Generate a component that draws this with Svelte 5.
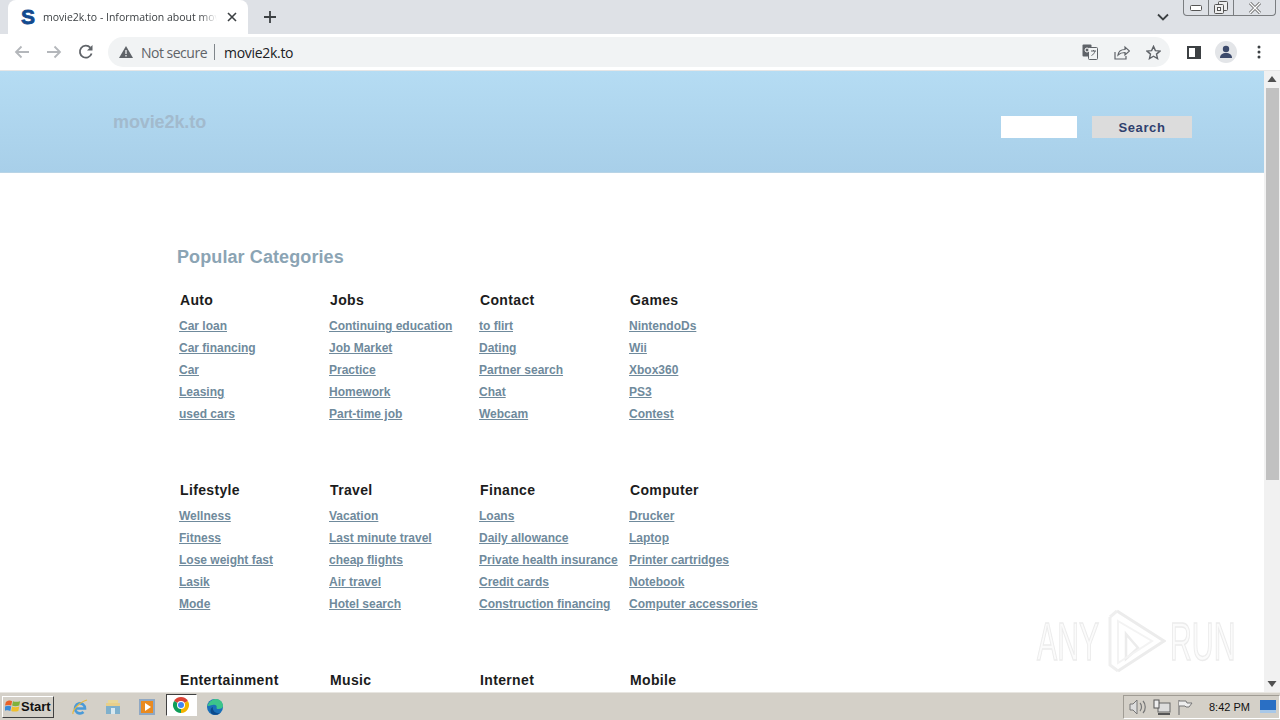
<script>
  const sections = [
    [
      { title: 'Auto', links: ['Car loan', 'Car financing', 'Car', 'Leasing', 'used cars'] },
      { title: 'Jobs', links: ['Continuing education', 'Job Market', 'Practice', 'Homework', 'Part-time job'] },
      { title: 'Contact', links: ['to flirt', 'Dating', 'Partner search', 'Chat', 'Webcam'] },
      { title: 'Games', links: ['NintendoDs', 'Wii', 'Xbox360', 'PS3', 'Contest'] }
    ],
    [
      { title: 'Lifestyle', links: ['Wellness', 'Fitness', 'Lose weight fast', 'Lasik', 'Mode'] },
      { title: 'Travel', links: ['Vacation', 'Last minute travel', 'cheap flights', 'Air travel', 'Hotel search'] },
      { title: 'Finance', links: ['Loans', 'Daily allowance', 'Private health insurance', 'Credit cards', 'Construction financing'] },
      { title: 'Computer', links: ['Drucker', 'Laptop', 'Printer cartridges', 'Notebook', 'Computer accessories'] }
    ],
    [
      { title: 'Entertainment', links: [] },
      { title: 'Music', links: [] },
      { title: 'Internet', links: [] },
      { title: 'Mobile', links: [] }
    ]
  ];
</script>

<div class="screen">
  <div class="tabstrip">
    <div class="tab">
      <span class="favicon">S</span>
      <span class="tab-title">movie2k.to - Information about movie2k.to</span>
      <svg class="tab-close" width="10" height="10" viewBox="0 0 10 10"><path d="M1 1l8 8M9 1l-8 8" stroke="#3c4043" stroke-width="1.6" /></svg>
    </div>
    <svg class="new-tab" width="12" height="12" viewBox="0 0 12 12"><path d="M6 0v12M0 6h12" stroke="#3c4043" stroke-width="1.8" /></svg>
    <div class="spacer"></div>
    <svg class="tab-menu" width="12" height="8" viewBox="0 0 12 8"><path d="M1 1.5l5 5 5-5" fill="none" stroke="#3c4043" stroke-width="1.8" /></svg>
    <div class="winctl">
      <span class="win-btn min"><svg width="12" height="6" viewBox="0 0 12 6"><rect x="0.5" y="0.5" width="11" height="5" rx="1" fill="#fff" stroke="#555" /></svg></span>
      <span class="win-btn max"><svg width="14" height="13" viewBox="0 0 14 13"><rect x="4.5" y="0.5" width="9" height="9" rx="1" fill="#eee" stroke="#555" /><rect x="0.5" y="3.5" width="9" height="9" rx="1" fill="#eee" stroke="#555" /><rect x="3.5" y="6.5" width="3" height="3" fill="#fff" stroke="#555" /></svg></span>
      <span class="win-btn close"><svg width="14" height="12" viewBox="0 0 14 12"><path d="M2 1l10 10M12 1L2 11" stroke="#666" stroke-width="3" /><path d="M2 1l10 10M12 1L2 11" stroke="#fff" stroke-width="1.4" /></svg></span>
    </div>
  </div>

  <div class="toolbar">
    <svg class="nav" width="16" height="14" viewBox="0 0 16 14"><path d="M15 7H2M7.5 1.5L2 7l5.5 5.5" fill="none" stroke="#b4b7bb" stroke-width="1.8" /></svg>
    <svg class="nav" width="16" height="14" viewBox="0 0 16 14"><path d="M1 7h13M8.5 1.5L14 7l-5.5 5.5" fill="none" stroke="#b4b7bb" stroke-width="1.8" /></svg>
    <svg class="nav" width="16" height="16" viewBox="0 0 16 16"><path d="M13.6 9.5A6 6 0 1 1 12.3 3.6" fill="none" stroke="#5f6368" stroke-width="1.8" /><path d="M14.5 1v5.5H9z" fill="#5f6368" /></svg>
    <div class="omnibox">
      <svg width="16" height="14" viewBox="0 0 16 14"><path d="M8 1l7 12H1z" fill="#5f6368" /><path d="M8 5v4M8 10v1.5" stroke="#f1f3f4" stroke-width="1.3" /></svg>
      <span class="not-secure">Not secure</span>
      <span class="divider"></span>
      <span class="url">movie2k.to</span>
      <div class="spacer"></div>
      <svg class="omni-icon" width="16" height="16" viewBox="0 0 16 16"><rect x="0.5" y="0.5" width="9" height="12" rx="1" fill="#5f6368" /><rect x="6.5" y="3.5" width="9" height="12" rx="1" fill="#f1f3f4" stroke="#5f6368" /><path d="M9 7h5M11.5 6v1M13 7c-.5 2-2 4-3.500 4.500" fill="none" stroke="#5f6368" /><circle cx="5" cy="6" r="2" fill="none" stroke="#fff" /></svg>
      <svg class="omni-icon" width="16" height="15" viewBox="0 0 16 15"><path d="M1 7v7h11v-3" fill="none" stroke="#5f6368" stroke-width="1.2" /><path d="M4 10c.5-4 3-5.500 7-5.500V2l4.500 4-4.500 4V7.500c-3 0-5 .5-7 2.500z" fill="none" stroke="#5f6368" stroke-width="1.2" /></svg>
      <svg class="omni-icon star" width="15" height="15" viewBox="0 0 16 16"><path d="M8 1.500l2 4.500 4.900.5-3.700 3.200 1.100 4.800L8 12l-4.300 2.500 1.100-4.800L1.100 6.500 6 6z" fill="none" stroke="#5f6368" stroke-width="1.500" /></svg>
    </div>
    <svg class="side-panel" width="14" height="13" viewBox="0 0 14 13"><rect x="1" y="1" width="12" height="11" fill="none" stroke="#3c4043" stroke-width="2" /><rect x="8" y="1" width="5" height="11" fill="#3c4043" /></svg>
    <span class="avatar">
      <svg width="14" height="14" viewBox="0 0 14 14"><circle cx="7" cy="4" r="3.200" fill="#3c4a6b" /><path d="M1 13c0-3.500 2.500-5 6-5s6 1.500 6 5z" fill="#3c4a6b" /></svg>
    </span>
    <svg class="menu" width="4" height="14" viewBox="0 0 4 14"><circle cx="2" cy="2" r="1.500" fill="#3c4043" /><circle cx="2" cy="7" r="1.500" fill="#3c4043" /><circle cx="2" cy="12" r="1.500" fill="#3c4043" /></svg>
  </div>

  <div class="viewport">
    <main class="page">
      <header class="hero">
        <a class="logo" href="#top">movie2k.to</a>
        <div class="search">
          <input class="search-input" type="text" aria-label="Search" />
          <button class="search-btn">Search</button>
        </div>
      </header>

      <section class="categories">
        <h1>Popular Categories</h1>
        {#each sections as row}
          <div class="row">
            {#each row as cat}
              <div class="cat">
                <h2>{cat.title}</h2>
                {#each cat.links as link}
                  <a href="#top">{link}</a>
                {/each}
              </div>
            {/each}
          </div>
        {/each}
      </section>

      <div class="watermark" aria-hidden="true">
        <span class="mark-any">ANY</span>
        <svg class="mark-play" width="62" height="64" viewBox="0 0 62 64"><path d="M13 2l47 30-46 30" fill="none" stroke="#ececec" stroke-width="3" /><path d="M6 8v48l8 6M13 2L6 8" fill="none" stroke="#efefef" stroke-width="3" /><path d="M22 25l12 14-12 11z" fill="none" stroke="#ececec" stroke-width="2.500" /><path d="M14 12l34 20-34 22z" fill="none" stroke="#f3f3f3" stroke-width="2" /></svg>
        <span class="mark-run">RUN</span>
      </div>
    </main>

    <div class="scrollbar">
      <svg class="arrow" width="16" height="17" viewBox="0 0 16 17"><path d="M8 5l4.500 6h-9z" fill="#505050" /></svg>
      <div class="track"><div class="thumb"></div></div>
      <svg class="arrow" width="16" height="17" viewBox="0 0 16 17"><path d="M8 12l4.500-6h-9z" fill="#505050" /></svg>
    </div>
  </div>

  <footer class="taskbar">
    <button class="start">
      <svg width="16" height="15" viewBox="0 0 18 16"><path d="M1 3c3-2 5-2 7-1L7 7C5 6 3 6 0 7z" fill="#e8622a" /><path d="M9 2c2 1 5 1 8 0l-1 5c-3 1-6 1-8 0z" fill="#7fb13c" /><path d="M0 8c3-1 5-1 7 0l-1 5c-2-1-4-1-7 0z" fill="#3a8ad8" /><path d="M8 8c2 1 5 1 8 0l-1 5c-3 1-6 1-8 0z" fill="#f0bf2c" /></svg>
      <span>Start</span>
    </button>
    <div class="quick">
      <span class="task">
        <svg width="18" height="18" viewBox="0 0 18 18"><path d="M4.500 10.500h9.500a5 5 0 1 0-1.500 3.500" fill="none" stroke="#4a9ad8" stroke-width="2.600" /><path d="M2 16c-1-3 6-12 14-14" fill="none" stroke="#e8b83c" stroke-width="1.200" /></svg>
      </span>
      <span class="task">
        <svg width="18" height="18" viewBox="0 0 18 18"><path d="M4 2h10v5H4z" fill="#e8d89a" /><path d="M2 5h14v11H2z" fill="#7fb0cc" /><path d="M2 5h14v3H2z" fill="#e8cf8a" /><rect x="7" y="10" width="4" height="6" fill="#d8e8ef" /></svg>
      </span>
      <span class="task">
        <svg width="18" height="18" viewBox="0 0 18 18"><rect x="1" y="1" width="16" height="16" fill="#8fa8c4" /><rect x="3" y="3" width="12" height="12" fill="#e98a20" /><path d="M7 5l6 4-6 4z" fill="#fff" /></svg>
      </span>
      <span class="task active">
        <svg width="18" height="18" viewBox="0 0 18 18"><path d="M9 9L2.070 5A8 8 0 0 1 15.930 5z" fill="#db4437" /><path d="M9 9l6.930-4A8 8 0 0 1 9 17z" fill="#f4b400" /><path d="M9 9v8A8 8 0 0 1 2.070 5z" fill="#0f9d58" /><circle cx="9" cy="9" r="4" fill="#fff" /><circle cx="9" cy="9" r="3" fill="#4285f4" /></svg>
      </span>
      <span class="task edge">
        <svg width="18" height="18" viewBox="0 0 18 18"><circle cx="9" cy="9" r="8" fill="#1a6fb8" /><path d="M1.500 8C3 3 7 1 10 1c4 0 7 3 7 7 0 2-2 3-4.500 3-1.500 0-2-.5-2-1 1-2-1-4-4-3-2 .5-4 1-5.500 1z" fill="#3cc48a" /><path d="M6 16c-2-2-2-6 1-7-1 3 2 7 7 6-2 2-5 2.500-8 1z" fill="#0c4a8c" /></svg>
      </span>
    </div>
    <div class="spacer"></div>
    <div class="tray">
      <svg width="18" height="16" viewBox="0 0 18 16"><path d="M1 5h3l4-4v14l-4-4H1z" fill="#ddd" stroke="#777" /><path d="M11 4c2 2 2 6 0 8M14 2c3 3 3 9 0 12" fill="none" stroke="#777" stroke-width="1.200" /></svg>
      <svg width="18" height="16" viewBox="0 0 18 16"><rect x="5" y="4" width="12" height="9" fill="#ddd" stroke="#666" /><rect x="1" y="1" width="5" height="8" fill="#eee" stroke="#555" /><path d="M5 15h12" stroke="#555" stroke-width="2" /></svg>
      <svg width="16" height="16" viewBox="0 0 16 16"><path d="M2 1v15" stroke="#777" stroke-width="1.200" /><path d="M2 2h7l1 2h5l-3 4H9L8 7H2" fill="#eee" stroke="#777" /></svg>
      <span class="clock">8:42 PM</span>
      <svg class="desktop" width="16" height="14" viewBox="0 0 16 14"><rect width="16" height="12" fill="#2a6fc4" /><rect y="10" width="16" height="3" fill="#a8c8e8" /></svg>
    </div>
  </footer>
</div>

<style>
  :global(body) {
    margin: 0;
    overflow: hidden;
  }

  .screen {
    width: 1280px;
    height: 720px;
    display: flex;
    flex-direction: column;
    font-family: "Liberation Sans", Arial, sans-serif;
    overflow: hidden;
  }

  .spacer {
    flex: 1;
  }

  .tabstrip {
    height: 34px;
    flex: none;
    background: #dee1e6;
    display: flex;
    align-items: flex-end;
    padding-left: 8px;
  }

  .tab {
    width: 240px;
    height: 34px;
    background: #fff;
    border-radius: 8px 8px 0 0;
    display: flex;
    align-items: center;
    box-sizing: border-box;
    padding: 0 8px 0 12px;
  }

  .favicon {
    width: 16px;
    font: 900 21px/20px "Liberation Sans", sans-serif;
    color: #134a8e;
    text-align: center;
    -webkit-text-stroke: 0.8px #134a8e;
  }

  .tab-title {
    margin-left: 7px;
    flex: 1;
    min-width: 0;
    font-family: "Open Sans", sans-serif;
    font-size: 10.500px;
    color: #3c4043;
    white-space: nowrap;
    overflow: hidden;
    mask-image: linear-gradient(to right, #000 90%, transparent);
  }

  .tab-close {
    margin: 0 3px 0 10px;
  }

  .new-tab {
    margin: 0 0 11px 16px;
  }

  .tab-menu {
    margin: 0 14px 13px 0;
  }

  .winctl {
    align-self: flex-start;
    display: flex;
    height: 16px;
    margin-right: 4px;
    border: 1px solid #7a7d80;
    border-top: none;
    border-radius: 0 0 4px 4px;
    box-sizing: border-box;
  }

  .win-btn {
    display: flex;
    align-items: center;
    justify-content: center;
    height: 100%;
  }

  .win-btn.min {
    width: 24px;
    border-right: 1px solid #7a7d80;
  }

  .win-btn.max {
    width: 24px;
    border-right: 1px solid #7a7d80;
  }

  .win-btn.close {
    width: 41px;
  }

  .toolbar {
    height: 36px;
    flex: none;
    background: #fff;
    display: flex;
    align-items: center;
    padding: 0 0 0 14px;
    box-sizing: border-box;
  }

  .nav {
    margin-right: 16px;
  }

  .omnibox {
    width: 1062px;
    height: 30px;
    margin-left: -2px;
    background: #f1f3f4;
    border-radius: 15px;
    display: flex;
    align-items: center;
    box-sizing: border-box;
    padding: 0 7px 0 10px;
  }

  .not-secure {
    margin-left: 7px;
    font-family: "Open Sans", sans-serif;
    font-size: 14px;
    letter-spacing: -0.5px;
    color: #5f6368;
  }

  .divider {
    width: 1px;
    height: 16px;
    background: #80868b;
    margin: 0 9px 0 7px;
  }

  .url {
    font-family: "Open Sans", sans-serif;
    font-size: 14px;
    letter-spacing: -0.3px;
    color: #202124;
  }

  .omni-icon {
    margin-left: 16px;
  }

  .omni-icon.star {
    margin-right: 2px;
  }

  .side-panel {
    margin-left: 17px;
  }

  .avatar {
    width: 22px;
    height: 22px;
    margin-left: 14px;
    background: #e3e5e8;
    border-radius: 50%;
    display: flex;
    align-items: center;
    justify-content: center;
  }

  .menu {
    margin-left: 20px;
  }

  .viewport {
    flex: 1;
    min-height: 0;
    display: flex;
    border-top: 1px solid #e6e6e6;
  }

  .page {
    position: relative;
    flex: 1;
    min-width: 0;
    background: #fff;
    overflow: hidden;
  }

  .hero {
    height: 102px;
    box-sizing: border-box;
    background: linear-gradient(#b5dcf3, #a8cfe9);
    border-bottom: 1px solid #b8d4e6;
    display: flex;
    justify-content: space-between;
    padding: 40px 72px 0 113px;
  }

  .logo {
    font-size: 18px;
    line-height: 23px;
    font-weight: bold;
    letter-spacing: -0.1px;
    color: #a2bacd;
    text-decoration: none;
  }

  .search {
    display: flex;
    gap: 15px;
    margin-top: 5px;
    height: 22px;
  }

  .search-input {
    width: 76px;
    height: 22px;
    padding: 0;
    border: none;
    background: #fff;
    box-sizing: border-box;
  }

  .search-btn {
    width: 100px;
    height: 22px;
    padding: 0;
    border: none;
    background: #dcdcdc;
    color: #2f3f6e;
    font: bold 13px "Liberation Sans", sans-serif;
    letter-spacing: 0.6px;
  }

  .categories {
    padding: 72px 0 0 177px;
  }

  h1 {
    margin: 0 0 21px;
    font-size: 18px;
    line-height: 24px;
    font-weight: bold;
    letter-spacing: 0.1px;
    color: #8ba4b4;
  }

  .row {
    display: flex;
    height: 190px;
  }

  .cat {
    width: 150px;
    display: flex;
    flex-direction: column;
    align-items: flex-start;
    padding-left: 2px;
    box-sizing: border-box;
  }

  h2 {
    margin: 0 0 5px 1px;
    font-size: 14px;
    line-height: 20px;
    font-weight: bold;
    letter-spacing: 0.35px;
    color: #1c1c1c;
  }

  .cat a {
    font-size: 12px;
    line-height: 22px;
    font-weight: bold;
    color: #6f8a9c;
  }

  /* anyrun stamp over the page, bottom right */
  .watermark {
    position: absolute;
    left: 1037px;
    top: 538px;
    width: 196px;
    height: 64px;
    pointer-events: none;
  }

  .mark-any,
  .mark-run {
    position: absolute;
    top: 2px;
    font-size: 54px;
    line-height: 60px;
    color: #fbfbfb;
    -webkit-text-stroke: 1.5px #ececec;
    transform: scaleX(0.56);
    transform-origin: left center;
  }

  .mark-any {
    left: 0;
  }

  .mark-run {
    left: 133px;
  }

  .mark-play {
    position: absolute;
    left: 67px;
    top: 0;
  }

  .scrollbar {
    width: 16px;
    flex: none;
    background: #f1f1f1;
    display: flex;
    flex-direction: column;
  }

  .arrow {
    flex: none;
  }

  .track {
    flex: 1;
    min-height: 0;
  }

  .thumb {
    height: 392px;
    margin: 0 1px 0 2px;
    background: #c1c1c1;
  }

  .taskbar {
    height: 28px;
    flex: none;
    background: #d4d0c8;
    border-top: 1px solid #e8e6e1;
    box-sizing: border-box;
    display: flex;
    align-items: center;
    padding-left: 2px;
  }

  .start {
    width: 52px;
    height: 22px;
    padding: 0 0 0 2px;
    display: flex;
    align-items: center;
    gap: 0;
    background: #d4d0c8;
    border: 1px solid;
    border-color: #fff #404040 #404040 #fff;
    font: bold 13px "Liberation Sans", sans-serif;
    color: #111;
  }

  .quick {
    display: flex;
    margin-left: 9px;
  }

  .task {
    width: 33.500px;
    height: 26px;
    display: flex;
    align-items: center;
    justify-content: center;
    box-sizing: border-box;
  }

  .task.active {
    width: 31px;
    height: 22px;
    margin-left: 2px;
    background: #fff;
    border: 1px solid;
    border-color: #404040 #fff #fff #404040;
  }

  .task.edge {
    margin-left: 2px;
  }

  .tray {
    width: 157px;
    height: 24px;
    box-sizing: border-box;
    border: 1px solid;
    border-color: #a09c94 #fff #fff #a09c94;
    display: flex;
    align-items: center;
    gap: 6px;
    padding-left: 5px;
  }

  .clock {
    width: 47px;
    margin-left: 10px;
    font: 11px "Liberation Sans", sans-serif;
    color: #111;
    white-space: nowrap;
  }

  .desktop {
    margin-left: -2px;
  }
</style>
